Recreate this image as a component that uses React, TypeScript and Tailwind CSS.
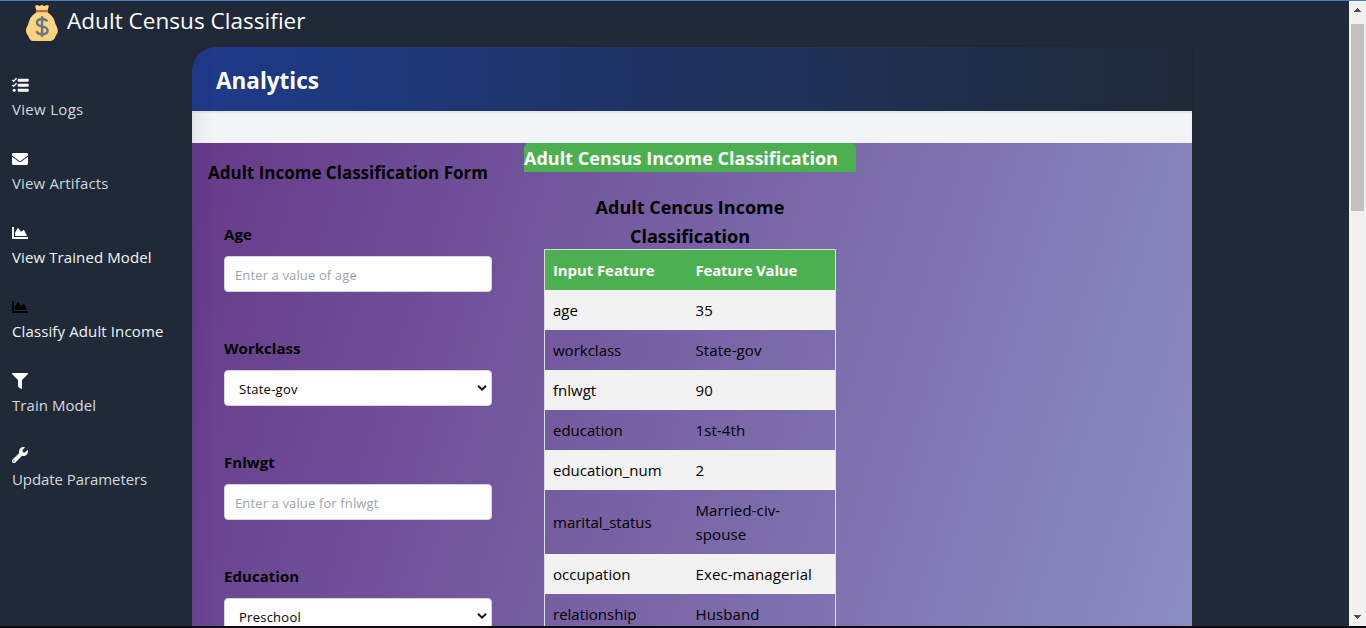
import type { ReactNode } from "react";
import { FaEnvelope, FaChartArea, FaFilter, FaWrench } from "react-icons/fa";

function TaskIcon() {
  return (
    <svg viewBox="0 0 17 16" className="h-4 w-[17px]">
      <g fill="currentColor">
        <rect x="5.700" y="1.700" width="11" height="3" rx=".7" />
        <rect x="5.700" y="6.700" width="11" height="3" rx=".7" />
        <rect x="5.700" y="11.700" width="11" height="3" rx=".7" />
        <circle cx="2.200" cy="13.200" r="1.500" />
      </g>
      <path d="M.4 3 1.700 4.200 4.500 1.300M.4 8 1.700 9.200 4.500 6.300" fill="none" stroke="currentColor" strokeWidth="1.400" />
    </svg>
  );
}

const navItems: { label: string; icon: ReactNode; tone: string; iconTone: string }[] = [
  { label: "View Logs", icon: <TaskIcon />, tone: "text-[#d6d9de] tracking-[0.3px]", iconTone: "text-white" },
  { label: "View Artifacts", icon: <FaEnvelope />, tone: "text-[#d1d5db] tracking-[0.15px]", iconTone: "text-white" },
  { label: "View Trained Model", icon: <FaChartArea />, tone: "text-[#f3f4f6] tracking-[0.1px]", iconTone: "text-white" },
  { label: "Classify Adult Income", icon: <FaChartArea />, tone: "text-[#f3f4f6] tracking-[0.12px]", iconTone: "text-black" },
  { label: "Train Model", icon: <FaFilter />, tone: "text-[#d6d9de] tracking-[0.05px]", iconTone: "text-white" },
  { label: "Update Parameters", icon: <FaWrench />, tone: "text-[#d6d9de] tracking-[-0.08px]", iconTone: "text-white" },
];

const fields = [
  { label: "Age", placeholder: "Enter a value of age" },
  { label: "Workclass", value: "State-gov" },
  { label: "Fnlwgt", placeholder: "Enter a value for fnlwgt" },
  { label: "Education", value: "Preschool" },
];

const rows = [
  ["age", "35"],
  ["workclass", "State-gov"],
  ["fnlwgt", "90"],
  ["education", "1st-4th"],
  ["education_num", "2"],
  ["marital_status", "Married-civ-spouse"],
  ["occupation", "Exec-managerial"],
  ["relationship", "Husband"],
];

function MoneyBag() {
  return (
    <svg viewBox="0 0 32 36" className="h-9 w-8 shrink-0">
      <path
        d="M9 .8 11.400.1l1.900.9 2.600-1 2.600 1 2-.9 2.500.7-1.300 4.200v2.500c2.400 1.600 4.700 3.600 6 6.300 1 2.200 1.400 4.900 2.500 7 1.500 2.600 1.900 4.500 1.400 6.700-.5 2-1.900 2.800-2.400 4.600-.6 2-1.900 3.900-4.700 3.900H7.400c-2.700 0-3.700-1.500-4.600-3.700C2.100 30.500.8 29.600.3 27.500c-.6-2.500-.2-4.400 1.200-6.700 1.200-2.100 1.400-4.800 2.500-7 1.300-2.700 3.800-4.700 6.300-6.300V5z"
        fill="#ffd584"
      />
      <path d="M10.200 5h11.600v2.200H10.200z" fill="#c4694a" />
      <path
        d="M21.200 16.500c-.8-1.600-2.600-2.500-5.100-2.500-3 0-5.100 1.400-5.100 3.700 0 2.400 2.300 3.100 5.100 3.700 3.100.6 5.400 1.500 5.400 4s-2.300 3.900-5.400 3.900c-2.800 0-4.900-1.100-5.600-3.100M16.100 11.200v20.500"
        fill="none"
        stroke="#687780"
        strokeWidth="2.500"
      />
    </svg>
  );
}

function Sidebar() {
  return (
    <nav className="z-10 flex w-48 shrink-0 flex-col gap-[26px] bg-[#1f2937] pt-[30px] pl-3 shadow-[2px_0_20px_rgba(31,41,55,0.12)]">
      {navItems.map((item) => (
        <a key={item.label} className="flex h-12 flex-col">
          <span className={`flex h-4 items-center text-[16px] ${item.iconTone}`}>{item.icon}</span>
          <span className={`mt-1 text-[15px] leading-6 whitespace-nowrap ${item.tone}`}>{item.label}</span>
        </a>
      ))}
    </nav>
  );
}

function Field({ label, placeholder, value }: { label: string; placeholder?: string; value?: string }) {
  return (
    <div className="h-[114px]">
      <div className="text-[15px] leading-6 font-bold tracking-[0.05px] text-black">{label}</div>
      <div className="mt-2.5 flex h-9 w-[268px] items-center justify-between rounded border border-[#d5d5d8] bg-white">
        {value ? (
          <>
            <span className="pt-1 pl-3.5 text-[13px] tracking-[0.25px] text-black">{value}</span>
            <svg viewBox="0 0 10 6" className="mr-1 h-1.5 w-2.5">
              <path d="M1 .8 5 4.600 9 .8" fill="none" stroke="#111" strokeWidth="2" />
            </svg>
          </>
        ) : (
          <span className="pt-1 pl-2.5 text-[13px] tracking-[0.13px] text-[#9ca3af]">{placeholder}</span>
        )}
      </div>
    </div>
  );
}

function FeatureTable() {
  return (
    <table className="w-[292px] table-fixed border-collapse border border-[#dddddd] text-[15px] leading-6 text-black">
      <colgroup>
        <col className="w-[143px]" />
        <col />
      </colgroup>
      <thead>
        <tr className="bg-[#4caf50] text-left text-white">
          <th className="h-10 px-2 py-0 tracking-[-0.1px]">Input Feature</th>
          <th className="px-2 py-0 tracking-[-0.2px]">Feature Value</th>
        </tr>
      </thead>
      <tbody>
        {rows.map(([name, value]) => (
          <tr key={name} className="odd:bg-[#f2f2f2]">
            <td className="px-2 py-2">{name}</td>
            <td className="py-2 pr-4 pl-2 tracking-[0.1px]">{value}</td>
          </tr>
        ))}
      </tbody>
    </table>
  );
}

function ScrollBar() {
  return (
    <div className="flex w-[17px] shrink-0 flex-col items-center bg-[#f1f1f1]">
      <svg viewBox="0 0 17 23" className="h-[23px] w-[17px]" shapeRendering="crispEdges">
        <path d="M5 11h7v-1h-1v-1h-1v-1H9V7H8v1H7v1H6v1H5z" fill="#505050" />
      </svg>
      <div className="h-[187px] w-[13px] bg-[#c1c1c1]" />
      <div className="grow" />
      <svg viewBox="0 0 17 17" className="h-[17px] w-[17px]" shapeRendering="crispEdges">
        <path d="M5 6h7v1h-1v1h-1v1H9v1H8V9H7V8H6V7H5z" fill="#505050" />
      </svg>
    </div>
  );
}

export default function App() {
  return (
    <div className="flex h-[628px] w-full flex-col overflow-hidden border-t border-b-2 border-t-[#4a7ebb] border-b-[#0c0a0c] bg-[#1f2937] font-['Open_Sans','Noto_Sans',sans-serif]">
      <div className="flex min-h-0 grow">
        <div className="flex min-w-0 grow flex-col">
          <header className="flex h-[46px] shrink-0 items-start pt-1 pl-[26px]">
            <MoneyBag />
            <h1 className="ml-[9px] text-[22.5px] leading-8 tracking-[0.04px] whitespace-nowrap text-white">
              Adult Census Classifier
            </h1>
          </header>
          <div className="flex min-h-0 grow">
            <Sidebar />
            <main className="flex w-[1000px] shrink-0 flex-col">
              <div className="flex h-16 shrink-0 items-center rounded-tl-3xl bg-gradient-to-r from-[#1e3a8a] to-[#1f2937] pb-px pl-6 shadow-[0_1px_3px_rgba(0,0,0,0.15)]">
                <h2 className="pt-1 text-[22.5px] font-bold text-white">Analytics</h2>
              </div>
              <div className="h-8 shrink-0 bg-[#f3f4f6] shadow-[inset_0_2px_2px_rgba(0,0,0,0.06)]" />
              <div className="flex min-h-0 grow overflow-hidden bg-[linear-gradient(107deg,#663a8a,#8b8ec2)]">
                <section className="w-[332px] shrink-0 pt-4 pl-4">
                  <h3 className="text-[17px] leading-7 font-bold whitespace-nowrap text-black">Adult Income Classification Form</h3>
                  <div className="mt-[35px] pl-4">
                    {fields.map((field) => (
                      <Field key={field.label} {...field} />
                    ))}
                  </div>
                </section>
                <section className="flex w-[332px] shrink-0 flex-col">
                  <h3 className="h-[29px] shrink-0 rounded-t-[5px] bg-[#4caf50] text-[18px] leading-[30px] font-bold tracking-[0.02px] whitespace-nowrap text-white">
                    Adult Census Income Classification
                  </h3>
                  <div className="flex flex-col pt-[21px] pl-5">
                    <h4 className="h-14 w-[292px] text-center text-[18px] leading-[29px] font-bold text-black">
                      Adult Cencus Income
                      <br />
                      Classification
                    </h4>
                    <FeatureTable />
                  </div>
                </section>
              </div>
            </main>
          </div>
        </div>
        <ScrollBar />
      </div>
    </div>
  );
}
